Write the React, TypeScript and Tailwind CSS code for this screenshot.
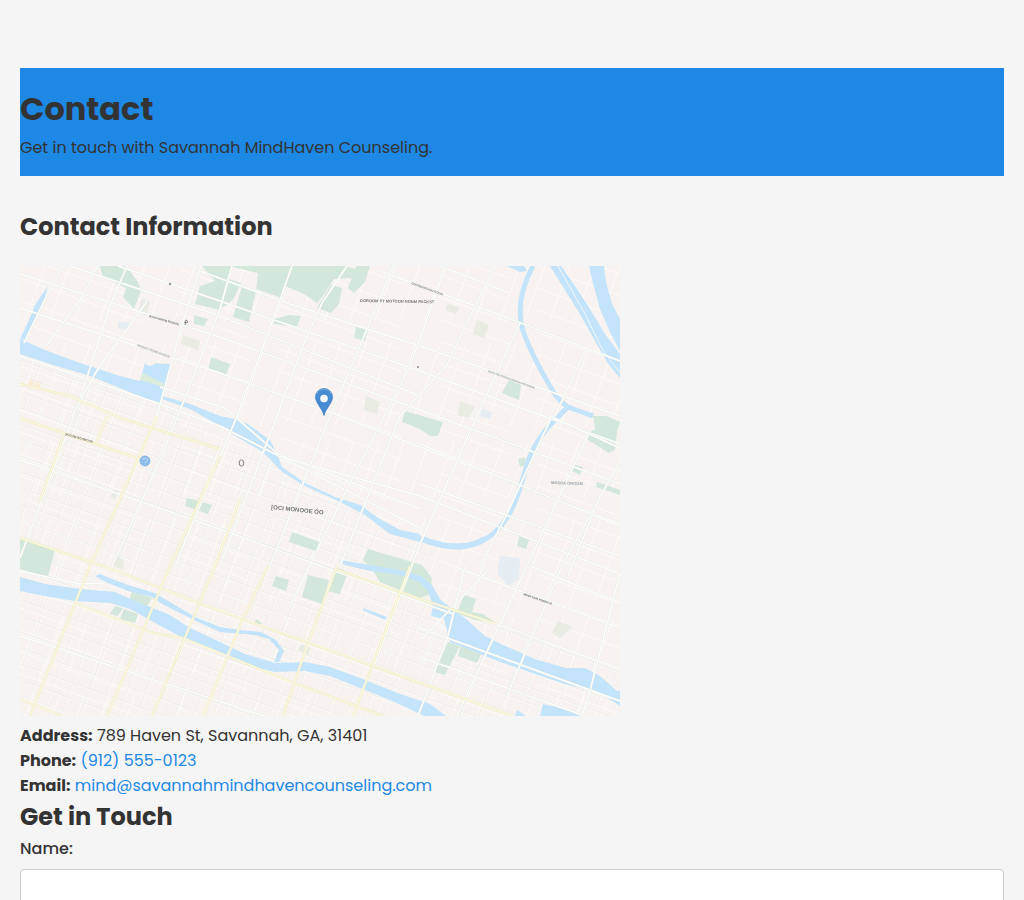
const contactLinks = [
  { label: "Phone:", text: "(912) 555-0123", href: "tel:9125550123" },
  {
    label: "Email:",
    text: "mind@savannahmindhavencounseling.com",
    href: "mailto:mind@savannahmindhavencounseling.com",
  },
];

const parks = [
  "M80 0 H106 L118 16 L121 25 L114 43 L103 31 L106 22 L83 11Z",
  "M182 0 H211 L200 44 L175 38 L180 20 L195 15Z",
  "M208 0 H271 L262 32 L236 23 L238 7Z",
  "M271 0 H326 L337 4 L334 12 L314 13 L303 30 L297 37 L284 28 L265 20Z",
  "M206 12 L221 17 L213 34 L202 42 L200 28Z",
  "M222 20 L236 25 L229 56 L213 51Z",
  "M336 0 H350 L345 16 L334 27 L328 22Z",
  "M311 19 L322 22 L319 38 L311 47 L297 42Z",
  "M254 53 L269 49 L281 50 L277 61 L254 58Z",
  "M336 61 L348 64 L345 75 L334 72Z",
  "M174 49 L188 53 L184 60 L174 58Z",
  "M191 91 L210 98 L206 109 L188 104Z",
  "M489 114 L501 119 L499 134 L482 127Z",
  "M385 145 L402 150 L423 156 L418 170 L410 170 L400 163 L382 156Z",
  "M573 150 H586 L600 156 L597 166 L595 184 L588 187 L578 180 L568 174 L567 168 L575 163Z",
  "M577 216 L600 224 V229 L576 221Z",
  "M555 199 L563 201 L560 209 L552 205Z",
  "M498 193 L505 191 L506 199 L500 201Z",
  "M167 232 L175 234 L192 239 L188 248 L165 240Z",
  "M0 273 L35 284 L28 311 L0 303Z",
  "M272 266 L299 276 L296 285 L269 276Z",
  "M348 283 L402 299 L412 312 L410 328 L400 332 L360 316 L352 303 L343 294Z",
  "M256 310 L269 314 L266 325 L252 320Z",
  "M288 309 L309 314 L302 338 L282 331Z",
  "M318 302 L328 306 L320 328 L308 325Z",
  "M112 325 L132 332 L124 345 L107 340Z",
  "M95 340 L103 342 L98 350 L90 348Z",
  "M104 343 L118 348 L115 357 L100 353Z",
  "M444 329 L456 333 L450 352 L437 347Z",
  "M452 346 L463 348 L476 357 L451 353Z",
  "M428 376 L440 380 L425 409 L415 406Z",
  "M441 379 L462 386 L457 397 L438 390Z",
  "M236 353 L242 357 L239 360 L235 357Z",
  "M499 270 L509 274 L506 283 L497 280Z",
];

const faintParks = [
  "M428 38 L440 42 L436 48 L425 44Z",
  "M457 54 L469 59 L464 72 L453 68Z",
  "M346 130 L360 136 L357 148 L344 144Z",
  "M538 355 L553 361 L540 372 L532 367Z",
  "M163 69 L180 75 L178 84 L161 78Z",
  "M440 135 L455 141 L449 152 L438 149Z",
  "M94 224 L99 226 L95 234 L90 231Z",
  "M97 290 L104 294 L103 304 L94 300Z",
  "M282 378 L291 382 L288 389 L278 384Z",
  "M122 32 L130 36 L126 50 L118 46Z",
  "M145 407 L153 409 L149 411Z",
];

const faintWater = [
  "M98 56 L110 56 L108 64 L98 62Z",
  "M462 143 L472 146 L470 153 L460 150Z",
  "M480 290 L500 292 L499 313 L488 320 L477 307Z",
];

const water = [
  "M28 20 L21 44 L5 74 L0 73 L9 54 L15 39Z",
  "M0 73 L25 84 L60 97 L100 110 L120 115 L125 97 L150 98 L145 122 L143 130 L170 138 L200 150 L214 153 L228 158 L250 174 L258 190 L262 201 L285 217 L315 231 L340 239 L360 253 L380 264 L400 268 V276 L370 268 L345 249 L320 236 L285 220 L262 206 L243 186 L222 174 L200 160 L170 143 L142 133 L138 138 L100 122 L70 110 L30 98 L0 88Z",
  "M487 0 H504 L507 5 L500 6Z",
  "M530 0 H541 L555 20 L570 43 L585 68 L600 88 V112 L589 99 L575 75 L560 48 L545 24Z",
  "M569 0 H584 L586 16 L592 38 L600 53 V85 L590 66 L580 43 L573 17Z",
  "M0 311 L25 318 L60 323 L95 326 L120 337 L150 349 L170 362 L200 376 L225 388 L255 397 L285 396 L310 401 L340 412 L380 428 L410 438 L426 450 H404 L375 436 L340 422 L310 410 L285 405 L255 406 L230 400 L200 388 L165 373 L130 354 L110 343 L90 337 L55 335 L30 331 L0 325Z",
  "M75 310 L80 308 L92 313 L108 319 L135 327 L150 336 L175 351 L200 361 L220 364 L241 366 L256 374 L264 385 L259 396 H254 L259 384 L249 373 L235 369 L200 366 L174 354 L144 339 L132 331 L108 325 L86 316Z",
  "M319 294 L350 299 L380 304 L401 310 L412 319 L420 333 L433 344 L445 352 L465 370 L485 380 L515 393 L545 402 L565 402 L580 410 L597 425 H600 V440 L585 430 L570 424 L545 418 L515 408 L480 396 L460 388 L430 376 L424 353 L411 350 L413 340 L408 325 L399 316 L380 309 L350 305 L325 299Z",
  "M520 450 L523 438 L545 443 L560 450Z",
  "M495 450 L497 444 L506 450Z",
  "M343 342 L367 351 L365 354 L343 344Z",
];

const yellowRoads = [
  "M0 118 L50 130 L100 152 L200 183",
  "M0 152 L46 168 L117 192",
  "M0 272 L83 300 L200 345 L400 417 L493 450",
  "M57 338 L133 367 L163 372 L200 387 L274 417 L363 450",
  "M0 433 L42 450",
  "M315 303 L400 333 L477 358",
  "M137 150 L118 193 L107 217 L70 300 L10 450",
  "M200 190 L150 300 L87 450",
  "M220 233 L195 300 L132 450",
  "M248 300 L222 355 L183 450",
  "M317 300 L288 377 L263 450",
  "M390 300 L333 450",
  "M44 168 L20 235",
  "M87 150 L76 178",
];

const whiteRoads = [
  "M0 8 L200 71 L400 144 L600 218",
  "M50 0 L200 50 L400 130",
  "M98 0 L200 35 L400 105 L600 178",
  "M0 42 L200 107 L320 150 L600 258",
  "M180 5 L270 38 L400 80 L600 150",
  "M360 5 L480 49 L600 95",
  "M420 0 L489 27",
  "M0 90 L140 138 L200 160 L400 262",
  "M140 121 L205 142 L258 188 L400 243",
  "M258 190 L400 230 L600 308",
  "M0 194 L200 263 L433 348",
  "M0 305 L60 318 L85 317",
  "M400 178 L600 260",
  "M400 218 L600 290",
  "M433 300 L600 362",
  "M477 358 L600 403",
  "M400 362 L600 435",
  "M400 391 L565 450",
  "M510 300 L600 337",
  "M0 370 L245 450",
  "M43 0 L28 27 L4 77",
  "M78 0 L62 31 L26 80",
  "M107 0 L90 40 L60 133 L0 292",
  "M127 35 L76 106 L52 150",
  "M181 0 L163 55 L137 150",
  "M212 0 L200 43 L142 190 L92 300",
  "M272 0 L250 62 L217 150 L155 300",
  "M327 0 L302 37 L283 80 L257 150 L200 300",
  "M373 0 L340 80 L310 150 L250 300",
  "M426 0 L390 100 L326 225 L270 340",
  "M475 0 L426 100 L380 150 L320 300",
  "M500 57 L457 150 L400 278 L354 400",
  "M532 150 L485 252 L460 300",
  "M570 165 L507 300 L437 450",
  "M600 195 L542 300 L487 430",
  "M472 300 L402 373",
  "M600 307 L570 425 L562 450",
  "M580 230 L548 310",
  "M565 85 L535 150",
  "M530 150 L600 182",
  "M445 300 L428 370 L398 450",
];

// river on the right side, drawn as one stroked line
const bend =
  "M513 0 Q494 35 503 65 Q512 90 530 120 Q537 134 548 141 L573 150 M548 141 L538 151 Q517 170 507 198 Q496 240 486 253 Q470 278 440 281 Q420 281 398 272";

const streets = Array.from({ length: 42 }, (_, i) => i);

function Pin() {
  return (
    <g>
      <path
        d="M304 149.500 C302 142 295.500 137 295.500 131 A8.500 8.500 0 0 1 312.500 131 C312.500 137 306 142 304 149.500Z"
        fill="#478bd3"
        stroke="#397bbd"
        strokeWidth="0.700"
      />
      <path d="M297 128 A7.500 7.500 0 0 1 311 128" fill="none" stroke="#76a9dd" />
      <circle cx="304" cy="132.500" r="3.800" fill="#f7fbff" />
    </g>
  );
}

function LocationMap() {
  return (
    <svg
      viewBox="0 0 600 450"
      role="img"
      aria-label="Map of our location"
      className="block h-auto w-full max-w-[600px] bg-[#f8f3f0]"
    >
      <defs>
        <clipPath id="dense">
          <path d="M0 90 L140 138 L262 204 L420 285 L400 330 L600 405 V450 H0Z" />
        </clipPath>
        <filter id="soft">
          <feGaussianBlur stdDeviation="0.450" />
        </filter>
      </defs>

      <g filter="url(#soft)">
        <path d="M10 113 L22 117 L18 124 L8 120Z" fill="#faecd6" />

        {/* side streets */}
        <g stroke="#fdfcfa" strokeWidth="0.900">
          {streets.map((i) => (
            <g key={i}>
              <path d={`M0 ${i * 22 - 230} l600 216`} strokeDasharray="130 40 75 30" />
              <path d={`M${i * 25} 0 l-168 450`} strokeDasharray="58 24 90 16" />
            </g>
          ))}
        </g>
        <g clipPath="url(#dense)" strokeWidth="0.600">
          {streets.map((i) => (
            <g key={i}>
              <path d={`M0 ${i * 16 - 210} l600 216`} stroke="#e5eae4" />
              <path d={`M0 ${i * 16 - 209} l600 216`} stroke="#fff" />
              <path d={`M${i * 19} 0 l-168 450`} stroke="#e9ece6" />
              <path d={`M${i * 19 + 1} 0 l-168 450`} stroke="#fff" />
            </g>
          ))}
        </g>

        <g fill="#d3e8da">
          {parks.map((d) => (
            <path key={d} d={d} />
          ))}
        </g>
        <g fill="#e8ece3">
          {faintParks.map((d) => (
            <path key={d} d={d} />
          ))}
        </g>
        <g fill="#e6eef4">
          {faintWater.map((d) => (
            <path key={d} d={d} />
          ))}
        </g>

        <g fill="#c3e4fa">
          {water.map((d) => (
            <path key={d} d={d} />
          ))}
        </g>
        <path d={bend} fill="none" stroke="#c3e4fa" strokeWidth="5" />
        <path d="M402 273 Q440 288 465 273" fill="none" stroke="#c3e4fa" strokeWidth="6" />
        <path
          d="M538 0 L565 48 L582 83 L600 107"
          fill="none"
          stroke="#f5f8f6"
          strokeWidth="1"
        />
        <circle cx="130" cy="95" r="5" fill="#f8f3f0" />
        <path d="M123 107 L145 118 L143 121 L120 114Z" fill="#daecdc" />

        <g fill="none" strokeLinejoin="round">
          {whiteRoads.map((d) => (
            <g key={d}>
              <path d={d} stroke="#e2e9e1" strokeWidth="2.200" />
              <path d={d} stroke="#fefefc" strokeWidth="1.500" />
            </g>
          ))}
          {yellowRoads.map((d) => (
            <g key={d}>
              <path d={d} stroke="#f1edc6" strokeWidth="2.400" />
              <path d={d} stroke="#fcfae6" strokeWidth="1.100" />
            </g>
          ))}
        </g>

        <g fill="#777" fontFamily="Liberation Sans" fontWeight="bold">
          <text x="340" y="36" fontSize="4" transform="rotate(1 340 36)">
            DOROOM ST MOTOON NONM PACKST
          </text>
          <text x="391" y="18" fontSize="3" fill="#888" transform="rotate(20 391 18)">
            ONOOMMROOM ROOM
          </text>
          <text x="129" y="51" fontSize="3" transform="rotate(16 129 51)">
            BONOOMOM ROMOK
          </text>
          <text x="117" y="80" fontSize="3" fill="#a3a3a3" transform="rotate(20 117 80)">
            MOOOO MONN ROOOM
          </text>
          <text x="251" y="243" fontSize="6" transform="rotate(6 251 243)">
            [OCI MONOOE ÓO
          </text>
          <text x="45" y="169" fontSize="3" transform="rotate(16 45 169)">
            NOOOM ROOMOON
          </text>
          <text x="531" y="218" fontSize="4" fill="#98a0a6" transform="rotate(2 531 218)">
            MAOOE ONOOM
          </text>
          <text x="503" y="329" fontSize="3" transform="rotate(19 503 329)">
            MNOTTOM ROMOLM
          </text>
          <text x="468" y="106" fontSize="3" fill="#a6ada6" transform="rotate(20 468 106)">
            BOO OM ROOM ONOOM ROOMOE
          </text>
        </g>

        <g fill="none" stroke="#777" strokeWidth="0.900">
          <ellipse cx="221.500" cy="197" rx="2.300" ry="3.200" />
          <path d="M165 59 L166 54 Q169 55 167 57 L164 56" />
          <circle cx="150" cy="18" r="0.800" />
          <circle cx="398" cy="101" r="0.600" />
        </g>
        <circle cx="125" cy="195" r="5" fill="#8dbce9" stroke="#76aada" strokeWidth="0.700" />
        <path d="M122 193 Q126 191 128 194 L125 197" fill="none" stroke="#c0dbf3" />
      </g>
      <Pin />
    </svg>
  );
}

export default function App() {
  return (
    <div className="min-h-screen bg-[#f5f5f5] px-5 pt-[68px] pb-5 font-['Poppins','Inter',sans-serif] text-base leading-[25px] text-[#333]">
      <header className="bg-[#1e88e5] py-4">
        <h1 className="mb-0.5 text-[32px] leading-[49px] font-bold">Contact</h1>
        <p>Get in touch with Savannah MindHaven Counseling.</p>
      </header>

      <main>
        <section className="mt-8">
          <h2 className="mb-5 text-2xl leading-[38px] font-bold">
            Contact Information
          </h2>
          <LocationMap />
          <div className="mt-[7px]">
            <p>
              <strong className="font-bold">Address:</strong> 789 Haven St,
              Savannah, GA, 31401
            </p>
            {contactLinks.map((item) => (
              <p key={item.label}>
                <strong className="font-bold">{item.label}</strong>{" "}
                <a href={item.href} className="text-[#1e88e5]">
                  {item.text}
                </a>
              </p>
            ))}
          </div>
        </section>

        <section>
          <h2 className="text-2xl leading-[38px] font-bold">Get in Touch</h2>
          <form>
            <label htmlFor="name" className="block font-medium">
              Name:
            </label>
            <input
              id="name"
              name="name"
              type="text"
              className="mt-2 block h-12 w-full rounded border border-[#ccc] bg-white px-3"
            />
          </form>
        </section>
      </main>
    </div>
  );
}
